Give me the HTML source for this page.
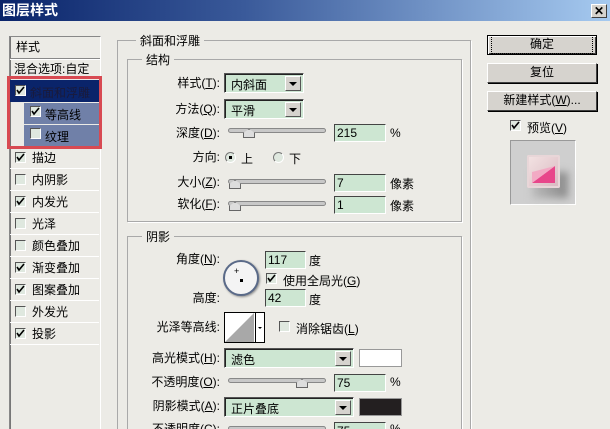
<!DOCTYPE html>
<html><head><meta charset="utf-8"><style>
*{margin:0;padding:0;box-sizing:border-box}
html,body{width:610px;height:429px;overflow:hidden}
body{background:#ecebe6;font-family:"Liberation Sans","Noto Sans CJK SC","WenQuanYi Zen Hei",sans-serif;font-size:12px;color:#000;position:relative}
.a{position:absolute;white-space:nowrap}
.title{left:0;top:0;width:610px;height:21px;background:linear-gradient(90deg,#0a246a 0%,#3a5a9a 40%,#a6caf0 100%)}
.lab{text-align:right;line-height:14px}
.sel{background:#cde6d2;border:1px solid;border-color:#555 #fff #fff #555;box-shadow:inset 1px 1px 0 #222;height:20px;padding:2px 0 0 6px;font-size:12px}
.arr{position:absolute;right:2px;top:2px;width:16px;height:15px;background:#d6d3ce;border:1px solid;border-color:#fff #555 #555 #fff}
.arr:after{content:"";position:absolute;left:3px;top:5px;border:4px solid transparent;border-top:4px solid #000;border-bottom:0}
.inp{background:#cde6d2;border:1px solid;border-color:#444 #fff #fff #444;height:18px;padding:1px 0 0 2px;font-size:12px}
.sl{height:5px;background:#c8c8c8;border:1px solid #888;border-radius:3px}
.th{width:12px;height:9px;background:#ddd;border:1px solid #666;clip-path:polygon(50% 0,100% 45%,100% 100%,0 100%,0 45%)}
.cb{width:11px;height:11px;background:#dfe8df;border:1px solid;border-color:#555 #fff #fff #555;overflow:hidden}
.cb svg{position:absolute;left:0;top:0}
.fs{border:1px solid #a9a9a9;box-shadow:1px 1px 0 #fff}
.lg{background:#ecebe6;padding:0 4px;font-size:12px}
.btn{background:#d6d3ce;border:1px solid;border-color:#fff #404040 #404040 #fff;box-shadow:1px 1px 0 #000;text-align:center;font-size:12px;line-height:17px}
.row{left:10px;width:89px;height:22px;border-bottom:1px solid #fff;font-size:12px;line-height:22px;padding-left:22px}
.rad{width:11px;height:11px;border-radius:50%;border:1px solid;border-color:#777 #fff #fff #777;background:#dfe8df}
</style></head><body>
<div class="a title"></div>
<div class="a" style="left:2px;top:1px;color:#fff;font-weight:bold;font-size:14px;line-height:18px">图层样式</div>
<div class="a btn" style="left:591px;top:4px;width:16px;height:14px;line-height:12px;font-size:12px;font-weight:bold;box-shadow:none">✕</div>

<div class="a" style="left:9px;top:36px;width:92px;height:393px;border:1px solid #888;border-right-color:#fff;border-bottom:none;box-shadow:inset 1px 0 0 #777;background:#ecebe6"></div>
<div class="a" style="left:16px;top:38px">样式</div>
<div class="a" style="left:10px;top:58px;width:90px;border-top:1px solid #888;border-bottom:1px solid #fff"></div>
<div class="a" style="left:14px;top:60px">混合选项:自定</div>
<div class="a" style="left:10px;top:80px;width:90px;height:22px;background:#0a246a"></div>
<div class="a" style="left:30px;top:84px;color:#1a1a3a">斜面和浮雕</div>
<div class="a cb" style="left:15px;top:85px"><svg width="9" height="9"><path d="M1 4l2 3 5-6" stroke="#000" stroke-width="1.6" fill="none"/></svg></div>
<div class="a" style="left:24px;top:103px;width:76px;height:21px;background:#7080a8"></div>
<div class="a cb" style="left:30px;top:106px"><svg width="9" height="9"><path d="M1 4l2 3 5-6" stroke="#000" stroke-width="1.6" fill="none"/></svg></div>
<div class="a" style="left:45px;top:106px">等高线</div>
<div class="a" style="left:24px;top:125px;width:76px;height:21px;background:#7080a8"></div>
<div class="a cb" style="left:30px;top:128px"></div>
<div class="a" style="left:45px;top:128px">纹理</div>
<div class="a" style="left:7px;top:76px;width:95px;height:73px;border:3px solid #d84a52"></div>
<div class="a row" style="top:147px"><span class="a cb" style="left:5px;top:5px"><svg width="9" height="9"><path d="M1 4l2 3 5-6" stroke="#000" stroke-width="1.6" fill="none"/></svg></span>描边</div>
<div class="a row" style="top:169px"><span class="a cb" style="left:5px;top:5px"></span>内阴影</div>
<div class="a row" style="top:191px"><span class="a cb" style="left:5px;top:5px"><svg width="9" height="9"><path d="M1 4l2 3 5-6" stroke="#000" stroke-width="1.6" fill="none"/></svg></span>内发光</div>
<div class="a row" style="top:213px"><span class="a cb" style="left:5px;top:5px"></span>光泽</div>
<div class="a row" style="top:235px"><span class="a cb" style="left:5px;top:5px"></span>颜色叠加</div>
<div class="a row" style="top:257px"><span class="a cb" style="left:5px;top:5px"><svg width="9" height="9"><path d="M1 4l2 3 5-6" stroke="#000" stroke-width="1.6" fill="none"/></svg></span>渐变叠加</div>
<div class="a row" style="top:279px"><span class="a cb" style="left:5px;top:5px"><svg width="9" height="9"><path d="M1 4l2 3 5-6" stroke="#000" stroke-width="1.6" fill="none"/></svg></span>图案叠加</div>
<div class="a row" style="top:301px"><span class="a cb" style="left:5px;top:5px"></span>外发光</div>
<div class="a row" style="top:323px"><span class="a cb" style="left:5px;top:5px"><svg width="9" height="9"><path d="M1 4l2 3 5-6" stroke="#000" stroke-width="1.6" fill="none"/></svg></span>投影</div>

<div class="a fs" style="left:117px;top:40px;width:354px;height:389px;border-bottom:none"></div>
<div class="a lg" style="left:136px;top:32px">斜面和浮雕</div>
<div class="a fs" style="left:127px;top:59px;width:335px;height:163px"></div>
<div class="a lg" style="left:142px;top:51px">结构</div>
<div class="a fs" style="left:127px;top:236px;width:335px;height:193px;border-bottom:none"></div>
<div class="a lg" style="left:142px;top:228px">阴影</div>

<div class="a lab" style="left:150px;width:70px;top:76px">样式(<u>T</u>):</div>
<div class="a sel" style="left:224px;top:73px;width:80px">内斜面<span class="arr"></span></div>
<div class="a lab" style="left:150px;width:70px;top:102px">方法(<u>Q</u>):</div>
<div class="a sel" style="left:224px;top:99px;width:80px">平滑<span class="arr"></span></div>
<div class="a lab" style="left:150px;width:70px;top:126px">深度(<u>D</u>):</div>
<div class="a sl" style="left:228px;top:128px;width:98px"></div>
<div class="a th" style="left:243px;top:129px"></div>
<div class="a inp" style="left:334px;top:124px;width:52px">215</div>
<div class="a" style="left:390px;top:126px">%</div>
<div class="a lab" style="left:150px;width:70px;top:150px">方向:</div>
<div class="a rad" style="left:225px;top:152px"></div><div class="a" style="left:229px;top:156px;width:3px;height:3px;background:#000"></div>
<div class="a" style="left:241px;top:150px">上</div>
<div class="a rad" style="left:273px;top:152px"></div>
<div class="a" style="left:289px;top:150px">下</div>
<div class="a lab" style="left:150px;width:70px;top:175px">大小(<u>Z</u>):</div>
<div class="a sl" style="left:228px;top:179px;width:98px"></div>
<div class="a th" style="left:229px;top:180px"></div>
<div class="a inp" style="left:334px;top:174px;width:52px">7</div>
<div class="a" style="left:390px;top:175px">像素</div>
<div class="a lab" style="left:150px;width:70px;top:197px">软化(<u>F</u>):</div>
<div class="a sl" style="left:228px;top:201px;width:98px"></div>
<div class="a th" style="left:229px;top:202px"></div>
<div class="a inp" style="left:334px;top:196px;width:52px">1</div>
<div class="a" style="left:390px;top:197px">像素</div>

<div class="a lab" style="left:150px;width:70px;top:252px">角度(<u>N</u>):</div>
<div class="a" style="left:223px;top:260px;width:36px;height:36px;border-radius:50%;border:2px solid #5a6a88;background:#f4f4f4;box-shadow:1px 1px 2px #888"></div>
<div class="a" style="left:240px;top:279px;width:3px;height:3px;background:#000"></div>
<div class="a" style="left:234px;top:266px;font-size:9px">+</div>
<div class="a inp" style="left:265px;top:251px;width:41px">117</div>
<div class="a" style="left:309px;top:252px">度</div>
<div class="a cb" style="left:266px;top:273px"><svg width="9" height="9"><path d="M1 4l2 3 5-6" stroke="#000" stroke-width="1.6" fill="none"/></svg></div>
<div class="a" style="left:283px;top:272px">使用全局光(<u>G</u>)</div>
<div class="a lab" style="left:150px;width:70px;top:291px">高度:</div>
<div class="a inp" style="left:265px;top:289px;width:41px">42</div>
<div class="a" style="left:309px;top:291px">度</div>
<div class="a lab" style="left:140px;width:80px;top:320px">光泽等高线:</div>
<div class="a" style="left:224px;top:312px;width:41px;height:31px;border:1px solid #000;background:#fff">
<svg width="39" height="29" style="position:absolute;left:0;top:0"><polygon points="0,29 29,0 29,29" fill="#a8a8a8"/><line x1="30.5" y1="0" x2="30.5" y2="29" stroke="#000"/><polygon points="33,14 37,14 35,16" fill="#000"/></svg></div>
<div class="a cb" style="left:279px;top:321px"></div>
<div class="a" style="left:296px;top:320px">消除锯齿(<u>L</u>)</div>
<div class="a lab" style="left:130px;width:90px;top:351px">高光模式(<u>H</u>):</div>
<div class="a sel" style="left:224px;top:348px;width:130px">滤色<span class="arr"></span></div>
<div class="a" style="left:359px;top:349px;width:43px;height:18px;background:#fff;border:1px solid #999"></div>
<div class="a lab" style="left:130px;width:90px;top:375px">不透明度(<u>O</u>):</div>
<div class="a sl" style="left:228px;top:378px;width:98px"></div>
<div class="a th" style="left:296px;top:379px"></div>
<div class="a inp" style="left:334px;top:374px;width:52px">75</div>
<div class="a" style="left:390px;top:375px">%</div>
<div class="a lab" style="left:130px;width:90px;top:399px">阴影模式(<u>A</u>):</div>
<div class="a sel" style="left:224px;top:397px;width:130px">正片叠底<span class="arr"></span></div>
<div class="a" style="left:359px;top:398px;width:43px;height:18px;background:#231f20;border:1px solid #999"></div>
<div class="a lab" style="left:130px;width:90px;top:422px">不透明度(<u>C</u>):</div>
<div class="a sl" style="left:228px;top:426px;width:98px"></div>
<div class="a inp" style="left:334px;top:422px;width:52px">75</div>
<div class="a" style="left:390px;top:422px">%</div>

<div class="a btn" style="left:487px;top:35px;width:110px;height:20px;border:1px solid #000;box-shadow:inset 1px 1px 0 #fff,inset -1px -1px 0 #404040"><span style="outline:1px dotted #000;display:inline-block;width:100px">确定</span></div>
<div class="a btn" style="left:487px;top:63px;width:110px;height:20px">复位</div>
<div class="a btn" style="left:487px;top:91px;width:110px;height:20px">新建样式(<u>W</u>)...</div>
<div class="a cb" style="left:510px;top:120px"><svg width="9" height="9"><path d="M1 4l2 3 5-6" stroke="#000" stroke-width="1.6" fill="none"/></svg></div>
<div class="a" style="left:527px;top:119px">预览(<u>V</u>)</div>
<div class="a" style="left:510px;top:140px;width:66px;height:65px;background:#cfcfcf;border:1px solid;border-color:#999 #fff #fff #999"></div>
<div class="a" style="left:532px;top:172px;width:36px;height:26px;background:linear-gradient(90deg,#bbb,#888);filter:blur(4px)"></div>
<div class="a" style="left:527px;top:155px;width:33px;height:33px;background:linear-gradient(135deg,#f4e4e4,#d8b8c0);border-radius:2px;box-shadow:inset 0 0 0 2px #e8d6d8"></div>
<svg class="a" style="left:530px;top:158px" width="27" height="27"><polygon points="2,25 25,8 25,25" fill="#e8468a"/><polygon points="2,25 2,14 25,8" fill="#f2aac4"/></svg>
</body></html>
